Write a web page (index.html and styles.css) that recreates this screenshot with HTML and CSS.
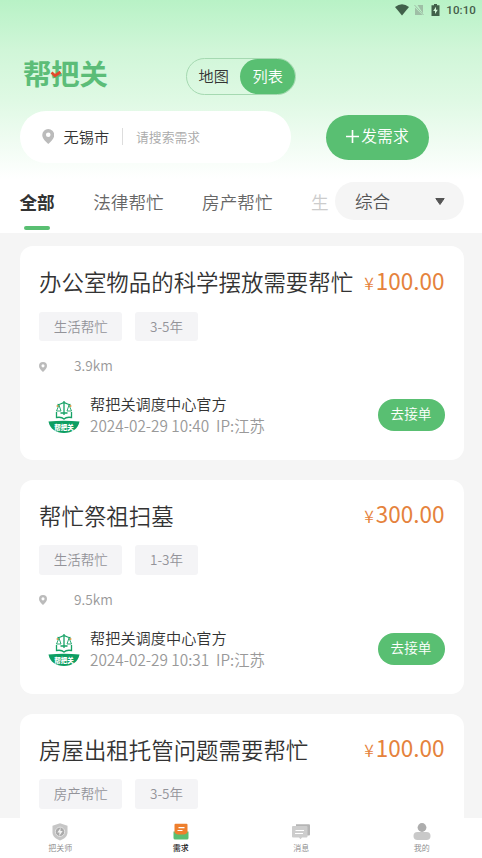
FILE: index.html
```html
<!DOCTYPE html>
<html lang="zh-CN">
<head>
<meta charset="utf-8">
<title>帮把关</title>
<link rel="stylesheet" href="styles.css">
</head>
<body>
<svg class="defs" width="0" height="0">
  <symbol id="pin" viewBox="0 0 12 15"><path fill-rule="evenodd" d="M6 0a6 6 0 0 1 6 6c0 3.600-3.500 6.600-6 9C3.500 12.600 0 9.600 0 6a6 6 0 0 1 6-6zm0 3.500a2.300 2.300 0 1 0 0 4.600 2.300 2.300 0 0 0 0-4.600z"/></symbol>
  <symbol id="emblem" viewBox="0 0 32 34">
    <g fill="none" stroke="#16a266" stroke-width="1.300">
      <path d="M16 1v14M9.500 4.500c3 .5 4.500-1.800 6.500-1.800s3.500 2.300 6.500 1.800M12.500 13h7"/>
      <path d="M11 5l-2.500 6h4.500zM21 5l-2 6h4.500z" stroke-width=".9"/>
      <path d="M8.500 12v5.500c3-.5 6 0 7.500 1.500 1.500-1.500 4.500-2 7.500-1.500V12"/>
    </g>
    <circle cx="9.500" cy="6" r="1" fill="#d99b45"/><circle cx="22.500" cy="6" r="1" fill="#d99b45"/>
    <path fill="#0d9e62" d="M.5 21.500Q16 20 31.500 21.500C30 29 24 33 16 33S2 29 .5 21.500z"/>
  </symbol>
</svg>
<div class="app">
  <header class="header">
    <div class="status">
      <svg class="wifi" viewBox="0 0 14 12"><path d="M0 3Q7-2.500 14 3L7 11.500z"/></svg>
      <svg class="sim" viewBox="0 0 10 12"><path d="M3.500 1H9v8.500zM1 3.500V11h7.500z"/><path d="M.5 1l9 10" stroke="#9fbfa6"/></svg>
      <svg class="battery" viewBox="0 0 9 12"><path d="M3 0h3v1.200h2.500V12H.5V1.200H3z"/><path fill="#d2f7d8" d="M5 2.700L2.200 7H4v3l2.800-4.300H5z"/></svg>
      <span>10:10</span>
    </div>
    <div class="brand-row">
      <div class="logo">帮把关<svg class="tick" viewBox="0 0 12 8"><path d="M1.500 2.500L5 5.700 10.500 2" fill="none" stroke="#e3492b" stroke-width="2.800"/></svg></div>
      <div class="toggle"><span>地图</span><span class="on">列表</span></div>
    </div>
    <div class="search-row">
      <div class="search">
        <svg class="pin"><use href="#pin"/></svg>
        <span class="city">无锡市</span><i class="divider"></i><span class="placeholder">请搜索需求</span>
      </div>
      <div class="publish"><svg viewBox="0 0 12 12"><path d="M6 0v12M0 6h12" stroke="#fff" stroke-width="1.500"/></svg>发需求</div>
    </div>
    <div class="filter-row">
      <nav class="tabs"><span class="tab active">全部</span><span class="tab">法律帮忙</span><span class="tab">房产帮忙</span><span class="tab faded">生</span></nav>
      <div class="select">综合<svg viewBox="0 0 10 7"><path d="M.8.5h8.400L5 6.500z" fill="#555" stroke="#555" stroke-linejoin="round"/></svg></div>
    </div>
  </header>

  <main class="list">
    <article class="card">
      <div class="top"><h2>办公室物品的科学摆放需要帮忙</h2><div class="price"><small>¥</small>100.00</div></div>
      <div class="tags"><span>生活帮忙</span><span>3-5年</span></div>
      <div class="distance"><svg><use href="#pin"/></svg>3.9km</div>
      <div class="owner"><svg class="avatar" viewBox="0 0 32 34"><use href="#emblem"/><text x="16" y="29.500" class="emblem-text">帮把关</text></svg>
        <div class="info"><div class="name">帮把关调度中心官方</div><div class="meta">2024-02-29 10:40&nbsp; IP:江苏</div></div>
        <div class="accept">去接单</div></div>
    </article>
    <article class="card">
      <div class="top"><h2>帮忙祭祖扫墓</h2><div class="price"><small>¥</small>300.00</div></div>
      <div class="tags"><span>生活帮忙</span><span>1-3年</span></div>
      <div class="distance"><svg><use href="#pin"/></svg>9.5km</div>
      <div class="owner"><svg class="avatar" viewBox="0 0 32 34"><use href="#emblem"/><text x="16" y="29.500" class="emblem-text">帮把关</text></svg>
        <div class="info"><div class="name">帮把关调度中心官方</div><div class="meta">2024-02-29 10:31&nbsp; IP:江苏</div></div>
        <div class="accept">去接单</div></div>
    </article>
    <article class="card">
      <div class="top"><h2>房屋出租托管问题需要帮忙</h2><div class="price"><small>¥</small>100.00</div></div>
      <div class="tags"><span>房产帮忙</span><span>3-5年</span></div>
    </article>
  </main>

  <footer class="tabbar">
    <div class="item"><svg viewBox="0 0 20 18"><path fill="#c6c6c6" d="M10 .3l7.500 2.500v6.500c0 4-3 6.700-7.500 8.200-4.500-1.500-7.500-4.200-7.500-8.200V2.800z"/><circle cx="10" cy="8.800" r="4.700" fill="#aaa" stroke="#e4e4e4"/><path fill="#f2f2f2" d="M10.700 4.800L7.300 9.400h2.200l-.3 3.500 3.500-4.800h-2.300z"/></svg><span>把关师</span></div>
    <div class="item current"><svg viewBox="0 0 20 18"><path fill="#59bf72" d="M2.500 8.500h15v6.500a1.500 1.500 0 0 1-1.500 1.500H4A1.500 1.500 0 0 1 2.500 15z"/><path fill="#ee7f2d" d="M4.500.8h11a1 1 0 0 1 1 1v7.700q-1.500 2-3.500 2H7q-2 0-3.500-2V1.800a1 1 0 0 1 1-1z"/><path d="M7.500 4.700h6M6.500 7.500h5" stroke="#fff" stroke-width="1.200"/></svg><span>需求</span></div>
    <div class="item"><svg viewBox="0 0 20 18"><path fill="#b5b5b5" d="M5 1.200h13a1 1 0 0 1 1 1v9.300a1 1 0 0 1-1 1H5z"/><path fill="#cdcdcd" d="M2 3h13.500a1 1 0 0 1 1 1v9.500a1 1 0 0 1-1 1H11l-1.500 1.700L8 14.500H2a1 1 0 0 1-1-1V4a1 1 0 0 1 1-1z"/><path d="M4.500 7.500h8.500M4 10.500h8" stroke="#fff" stroke-width="1.200"/></svg><span>消息</span></div>
    <div class="item"><svg viewBox="0 0 20 18"><rect x="1.500" y="9" width="17" height="8" rx="4" fill="#c9c9c9"/><circle cx="10" cy="4.500" r="4.400" fill="#adadad"/></svg><span>我的</span></div>
  </footer>
</div>
</body>
</html>
```

FILE: styles.css
```css
* { box-sizing: border-box; }
body {
  margin: 0;
  font-family: "Noto Sans CJK SC", sans-serif;
  font-weight: 350;
  color: #333;
}
svg { display: block; flex: none; }
.defs { position: absolute; }
.app {
  height: 858px;
  display: flex;
  flex-direction: column;
  overflow: hidden;
  background: #f5f5f5;
}
.header {
  flex: none;
  height: 233px;
  background: linear-gradient(to bottom, #b8f2c6 0, #d0f6d8 50px, #dff9e4 100px, #fff 179px);
}
.status {
  height: 20px;
  padding: 0 6px 0 0;
  display: flex;
  align-items: center;
  justify-content: flex-end;
  font: 500 11.500px/20px Roboto, sans-serif;
  letter-spacing: .1px;
  color: #455c4a;
  fill: #41604a;
}
.wifi { width: 14px; height: 12px; margin: -1px 5px 0 0; }
.sim { width: 10px; height: 12px; margin: -1px 7px 0 0; fill: #9fbfa6; }
.battery { width: 9px; height: 12px; margin: -1px 6px 0 0; }
.brand-row {
  height: 37px;
  margin-top: 38px;
  padding-left: 23px;
  display: flex;
  align-items: flex-start;
}
.logo {
  position: relative;
  width: 163px;
  font-size: 28.300px;
  line-height: 29px;
  font-weight: 700;
  color: #5cbd78;
}
.tick { position: absolute; left: 27px; top: 12px; width: 12px; height: 8px; }
.toggle {
  width: 110px;
  height: 37px;
  display: flex;
  border: 1px solid #a5d9b1;
  border-radius: 19px;
  font-size: 15.200px;
  line-height: 33px;
  text-align: center;
}
.toggle span { width: 53px; padding-left: 1px; }
.toggle .on {
  width: 56px;
  height: 35px;
  border-radius: 18px;
  background: #59bf72;
  color: #fff;
}
.search-row {
  margin-top: 16px;
  padding-left: 20px;
  display: flex;
  align-items: center;
  gap: 35px;
}
.search {
  width: 271px;
  height: 52px;
  padding: 0 0 1px 21.500px;
  display: flex;
  align-items: center;
  border-radius: 26px;
  background: #fff;
}
.pin { width: 12.500px; height: 15px; margin: 0 9.500px 1px 0; fill: #bbb; }
.city { margin-top: -1px; font-size: 15.200px; }
.divider { width: 1px; height: 17px; margin: 0 13px; background: #ddd; }
.placeholder { font-size: 12.800px; color: #aaa; }
.publish {
  width: 103px;
  height: 45px;
  display: flex;
  align-items: center;
  justify-content: center;
  gap: 2px;
  padding-bottom: 4px;
  border-radius: 23px;
  background: #59bf72;
  color: #fff;
  font-size: 15.800px;
}
.publish svg { width: 13px; height: 13px; margin-top: 3px; }
.filter-row {
  margin-top: 19px;
  padding: 0 18px 0 19.500px;
  display: flex;
  justify-content: space-between;
}
.tabs { display: flex; gap: 38.500px; font-size: 17.600px; color: #666; }
.tab {
  height: 48px;
  line-height: 39px;
  white-space: nowrap;
}
.active { font-weight: 700; color: #333; }
.active::after {
  content: "";
  display: block;
  width: 26px;
  height: 4px;
  margin: 5px auto 0;
  border-radius: 2px;
  background: #59bf72;
}
.faded { color: #ccc; }
.select {
  width: 129px;
  height: 38px;
  padding: 0 19px 0 20px;
  display: flex;
  align-items: center;
  justify-content: space-between;
  border-radius: 19px;
  background: #f5f5f5;
  font-size: 17.600px;
  line-height: 38px;
  color: #555;
}
.select svg { width: 10px; height: 7px; }
.list {
  flex: 1;
  min-height: 0;
  overflow: hidden;
  padding: 13px 18px 0 20px;
  display: flex;
  flex-direction: column;
  gap: 19.500px;
}
.card {
  flex: none;
  height: 214.300px;
  padding: 18px 19.500px 0 19px;
  border-radius: 13px;
  background: #fff;
}
.top {
  height: 34px;
  display: flex;
  align-items: center;
  justify-content: space-between;
  white-space: nowrap;
}
h2 { margin: 0; font-size: 22.450px; line-height: 34px; font-weight: inherit; }
.price { font-size: 22.500px; line-height: 34px; font-weight: 400; color: #e5823c; }
.price small { margin-right: 2px; font-size: 17.500px; font-weight: 350; }
.tags { display: flex; gap: 13px; margin-top: 13.500px; }
.tags span {
  height: 29.500px;
  padding: 0 14.700px;
  border-radius: 3px;
  background: #f4f4f6;
  color: #939399;
  font-size: 13.500px;
  line-height: 28px;
}
.distance {
  height: 20px;
  margin-top: 14px;
  display: flex;
  align-items: center;
  font-size: 13.700px;
  color: #999;
}
.distance svg { width: 8px; height: 10px; margin: 3px 27px 0 0; fill: #bbb; }
.owner { display: flex; height: 44px; margin-top: 18px; align-items: center; }
.avatar { width: 32px; height: 34px; margin: 3px 10px 0 9px; }
.emblem-text { font-size: 6.500px; font-weight: 900; fill: #fff; text-anchor: middle; }
.info { flex: 1; margin-top: -2px; font-size: 15.200px; line-height: 22px; white-space: nowrap; }
.meta { font-size: 15.350px; color: #999; }
.accept {
  width: 67px;
  height: 32px;
  border-radius: 16px;
  background: #59bf72;
  color: #fff;
  font-size: 13.600px;
  line-height: 29px;
  text-align: center;
}
.tabbar {
  flex: none;
  height: 40px;
  display: flex;
  background: #fff;
}
.item {
  flex: 1;
  padding-top: 5px;
  display: flex;
  flex-direction: column;
  align-items: center;
  color: #888;
  font-size: 8px;
  line-height: 12px;
}
.item svg { width: 20px; height: 18px; margin-bottom: 1px; }
.current { color: #222; font-weight: 500; }
```
